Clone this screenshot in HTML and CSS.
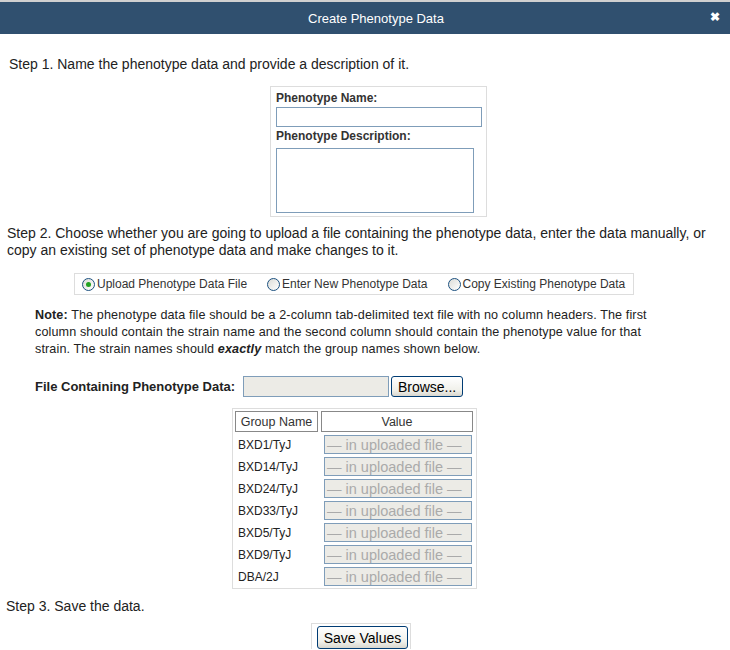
FILE: index.html
```html
<!DOCTYPE html>
<html>
<head>
<meta charset="utf-8">
<link rel="stylesheet" href="styles.css">
</head>
<body>
<div class="titlebar">
  <span class="title">Create Phenotype Data</span>
  <span class="close">&#x2716;</span>
</div>
<div class="content">
  <p class="step step1">Step 1. Name the phenotype data and provide a description of it.</p>
  <div class="namebox">
    <label class="lbl">Phenotype Name:</label>
    <div class="text-input"></div>
    <label class="lbl lbl2">Phenotype Description:</label>
    <div class="textarea"></div>
  </div>
  <p class="step step2">Step 2. Choose whether you are going to upload a file containing the phenotype data, enter the data manually, or copy an existing set of phenotype data and make changes to it.</p>
  <div class="radiobox">
    <span class="opt"><span class="radio checked"><span class="dot"></span></span>Upload Phenotype Data File</span>
    <span class="opt"><span class="radio"></span>Enter New Phenotype Data</span>
    <span class="opt"><span class="radio"></span>Copy Existing Phenotype Data</span>
  </div>
  <p class="note"><b>Note:</b> The phenotype data file should be a 2-column tab-delimited text file with no column headers. The first column should contain the strain name and the second column should contain the phenotype value for that strain. The strain names should <b><i>exactly</i></b> match the group names shown below.</p>
  <div class="filerow">
    <span class="filelbl">File Containing Phenotype Data:</span>
    <span class="fileinput"></span>
    <span class="btn browse">Browse...</span>
  </div>
  <div class="tablebox">
    <div class="grid">
      <div class="th th1">Group Name</div>
      <div class="th th2">Value</div>
      <div class="td">BXD1/TyJ</div><div class="val">— in uploaded file —</div>
      <div class="td">BXD14/TyJ</div><div class="val">— in uploaded file —</div>
      <div class="td">BXD24/TyJ</div><div class="val">— in uploaded file —</div>
      <div class="td">BXD33/TyJ</div><div class="val">— in uploaded file —</div>
      <div class="td">BXD5/TyJ</div><div class="val">— in uploaded file —</div>
      <div class="td">BXD9/TyJ</div><div class="val">— in uploaded file —</div>
      <div class="td">DBA/2J</div><div class="val">— in uploaded file —</div>
    </div>
  </div>
  <p class="step step3">Step 3. Save the data.</p>
  <div class="savebox"><span class="btn save">Save Values</span></div>
</div>
</body>
</html>
```
FILE: styles.css
```css
html, body {
  margin: 0;
  padding: 0;
  background: #fff;
  font-family: "Liberation Sans", Arial, sans-serif;
  color: #222;
  overflow: hidden;
}
.titlebar {
  height: 32px;
  border-top: 2px solid #d0d0d0;
  background: #30506f;
  color: #fff;
  font-size: 13px;
  display: flex;
  align-items: center;
  justify-content: center;
  position: relative;
}
.title { margin-left: 22px; }
.close {
  position: absolute;
  right: 10px;
  top: 8px;
  font-size: 12px;
  font-weight: bold;
}
.content { padding: 0; }
.step {
  font-size: 14px;
  line-height: 17px;
  margin: 0;
  color: #222;
}
.step1 { padding: 22px 0 0 9px; }
.namebox {
  width: 205px;
  margin: 13px 0 0 270px;
  border: 1px solid #ddd;
  padding: 4px 5px 3px 5px;
}
.lbl {
  display: block;
  font-size: 12px;
  font-weight: bold;
  color: #333;
  line-height: 14px;
}
.text-input {
  margin-top: 2px;
  width: 204px;
  height: 18px;
  border: 1px solid #7f9db9;
}
.lbl2 { margin-top: 2px; }
.textarea {
  margin-top: 5px;
  width: 196px;
  height: 63px;
  border: 1px solid #7f9db9;
}
.step2 { padding: 8px 0 0 7px; width: 710px; }
.radiobox {
  width: 551px;
  height: 20px;
  margin: 14px 0 0 74px;
  border: 1px solid #ddd;
  display: flex;
  align-items: center;
  font-size: 12px;
  color: #333;
  padding-left: 7px;
  white-space: nowrap;
}
.opt { display: flex; align-items: center; margin-right: 20px; flex-shrink: 0; }
.radio {
  width: 11px;
  height: 11px;
  border: 1px solid #1c5180;
  border-radius: 50%;
  background: linear-gradient(135deg, #dcdcd7, #fff);
  margin-right: 2px;
  display: flex;
  align-items: center;
  justify-content: center;
  flex-shrink: 0;
}
.dot { width: 5px; height: 5px; border-radius: 50%; background: #21a121; }
.note {
  font-size: 12.6px;
  letter-spacing: 0.12px;
  line-height: 17px;
  margin: 12px 0 0 35px;
  width: 624px;
  color: #222;
}
.filerow {
  display: flex;
  align-items: center;
  margin: 18px 0 0 35px;
}
.filelbl { font-size: 13px; font-weight: bold; color: #222; margin-right: 8px; }
.fileinput {
  width: 144px;
  height: 19px;
  border: 1px solid #7f9db9;
  background: #ecebe6;
}
.btn {
  display: inline-flex;
  align-items: center;
  justify-content: center;
  border: 1px solid #003c74;
  border-radius: 3px;
  background: linear-gradient(#ffffff, #f0f0ea 70%, #d8d6ce);
  font-size: 14px;
  color: #000;
}
.browse { width: 70px; height: 19px; margin-left: 2px; }
.tablebox {
  width: 240px;
  margin: 11px 0 0 232px;
  border: 1px solid #ddd;
  padding: 2px 1px 2px 2px;
}
.grid {
  display: grid;
  grid-template-columns: 83px 152px;
  column-gap: 3px;
  row-gap: 3px;
  font-size: 12px;
  color: #222;
}
.th {
  border: 1px solid #888;
  height: 19px;
  display: flex;
  align-items: center;
  justify-content: center;
  color: #333;
  font-size: 12.5px;
}
.td { display: flex; align-items: center; padding-left: 3px; height: 19px; }
.val {
  margin-left: 3px;
  width: 144px;
  height: 17px;
  border: 1px solid #7f9db9;
  background: #ecebe6;
  color: #aaa;
  font-size: 14.5px;
  display: flex;
  align-items: center;
  padding-left: 2px;
  white-space: nowrap;
  overflow: hidden;
}
.step3 { padding: 9px 0 0 6px; }
.savebox {
  width: 100px;
  margin: 8px 0 0 311px;
  border: 1px solid #ddd;
  border-bottom: none;
  padding: 2px 0 0 5px;
  height: 26px;
  box-sizing: border-box;
}
.save { width: 89px; height: 21px; }
```
